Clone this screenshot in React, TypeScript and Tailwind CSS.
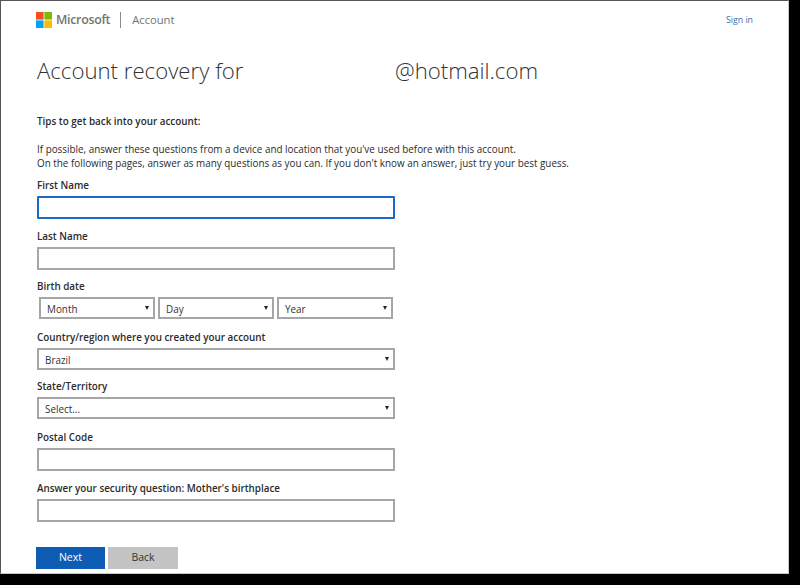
const font = { fontFamily: '"Open Sans", "Noto Sans", sans-serif' };

const Label = ({ children }: { children: string }) => (
  <p className="h-[22px] text-[9.85px] leading-[22px] font-semibold text-[#2b2b2b]">{children}</p>
);

const Field = ({ label, focused, className }: { label: string; focused?: boolean; className: string }) => (
  <div className={className}>
    <Label>{label}</Label>
    <div
      className={
        focused
          ? "h-[23px] w-[358px] border-2 border-[#1a69c4] rounded-[1px] bg-white"
          : "h-[23px] w-[358px] border-2 border-[#a6a6a6] bg-white"
      }
    />
  </div>
);

const Select = ({ value, className }: { value: string; className: string }) => (
  <div className={`flex h-[22px] items-center justify-between border-2 border-[#a6a6a6] bg-white pl-[6px] pr-[4px] text-[9.9px] text-[#333] ${className}`}>
    <span className="pt-[2px]">{value}</span>
    <span className="h-0 w-0 border-x-[2.5px] border-t-[4px] border-x-transparent border-t-[#222]" />
  </div>
);

export default function App() {
  return (
    <div className="h-[585px] w-[800px] overflow-hidden bg-black" style={font}>
      <div className="h-[574px] w-[789px] border-t border-l border-r border-b border-t-[#555] border-l-[#555] border-r-[#c8c8c8] border-b-[#c8c8c8] bg-white pl-[35px]">
        <header className="flex h-[37px] items-center justify-between pt-[1px] pr-[35px]">
          <div className="flex items-center">
            <svg width="16" height="16" viewBox="0 0 16 16">
              <rect width="7.6" height="7.6" fill="#f25022" />
              <rect x="8.4" width="7.6" height="7.6" fill="#7fba00" />
              <rect y="8.4" width="7.6" height="7.6" fill="#00a4ef" />
              <rect x="8.4" y="8.4" width="7.6" height="7.6" fill="#ffb900" />
            </svg>
            <span className="ml-[4px] text-[12.4px] font-semibold tracking-[-0.3px] text-[#737373]">Microsoft</span>
            <span className="ml-[10px] mr-[11px] h-[16px] w-px bg-[#8a8a8a]" />
            <span className="text-[11.2px] text-[#737373]">Account</span>
          </div>
          <a className="pt-[2px] text-[8.8px] text-[#3b6ea5]">Sign in</a>
        </header>

        <h1 className="mt-[15px] flex h-[36px] items-center pl-px text-[22.2px] font-light text-[#333]">
          <span className="w-[358px]">Account recovery for</span>
          <span>@hotmail.com</span>
        </h1>

        <div className="pl-px text-[9.87px] text-[#2b2b2b]">
          <p className="mt-[24px] h-[16px] leading-[16px] font-semibold">Tips to get back into your account:</p>
          <p className="mt-[13px] h-[14px] leading-[14px]">If possible, answer these questions from a device and location that you've used before with this account.</p>
          <p className="h-[14px] leading-[14px]">On the following pages, answer as many questions as you can. If you don't know an answer, just try your best guess.</p>

          <div className="mt-[4px]">
            <Field label="First Name" focused className="mb-[6px]" />
            <Field label="Last Name" className="mb-[5px]" />
            <div className="mb-[7px]">
              <Label>Birth date</Label>
              <div className="flex gap-[3px] pl-[2px]">
                <Select value="Month" className="w-[116px]" />
                <Select value="Day" className="w-[116px]" />
                <Select value="Year" className="w-[116px]" />
              </div>
            </div>
            <div className="mb-[5px]">
              <Label>Country/region where you created your account</Label>
              <Select value="Brazil" className="w-[358px]" />
            </div>
            <div className="mb-[7px]">
              <Label>State/Territory</Label>
              <Select value="Select..." className="w-[358px]" />
            </div>
            <Field label="Postal Code" className="mb-[6px]" />
            <Field label="Answer your security question: Mother's birthplace" className="mb-[25px]" />
          </div>
        </div>

        <div className="flex gap-[3px] text-[10.5px]">
          <button className="h-[22px] w-[69px] bg-[#0f5cb4] text-white">Next</button>
          <button className="h-[22px] w-[70px] bg-[#c4c4c4] text-[#333]">Back</button>
        </div>
      </div>
    </div>
  );
}
